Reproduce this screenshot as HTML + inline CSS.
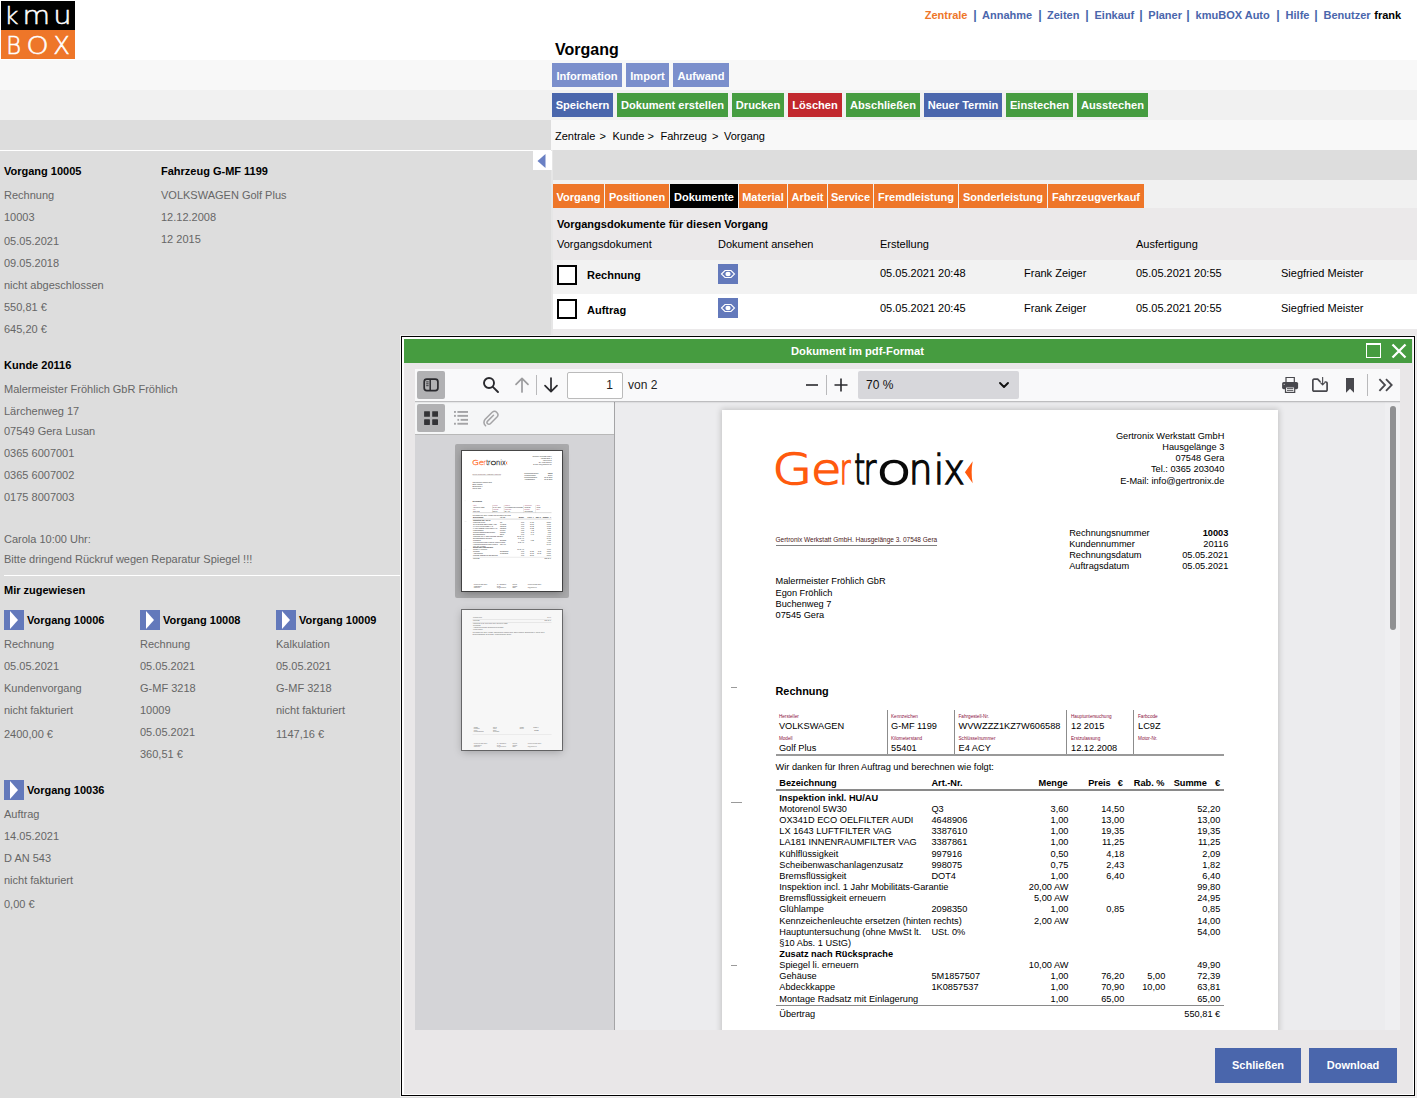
<!DOCTYPE html>
<html lang="de">
<head>
<meta charset="utf-8">
<title>kmuBOX - Vorgang</title>
<style>
*{box-sizing:border-box;margin:0;padding:0}
html,body{width:1417px;height:1098px;overflow:hidden;background:#fff}
body{position:relative;font-family:"Liberation Sans",sans-serif;font-size:11px;color:#000;line-height:14px}
.abs{position:absolute}
.t{position:absolute;white-space:nowrap;line-height:14px;height:14px}
.b{font-weight:bold}
.g{color:#666}
/* bands */
#band1{left:0;top:60px;width:1417px;height:30px;background:#f8f8f8}
#band2{left:0;top:90px;width:1417px;height:30px;background:#f1f1f1}
#band3{left:551px;top:120px;width:866px;height:30px;background:#f8f8f8}
#left{left:0;top:120px;width:551px;height:978px;background:#ddd}
#leftedge{left:551px;top:150px;width:2px;height:948px;background:#e6e6e6}
#right{left:553px;top:150px;width:864px;height:948px;background:#ebe9ea}
#band4{left:553px;top:150px;width:864px;height:30px;background:#ddd}
#band5{left:553px;top:180px;width:864px;height:28px;background:#f1f1f1}
.btn{position:absolute;height:24px;line-height:24px;color:#fff;font-weight:bold;font-size:12px;text-align:center;white-space:nowrap}
.lb{background:#7b8fcc}
.bl{background:#4a66ac}
.gr{background:#469c40}
.rd{background:#c1272d}
.or{background:#ee7629}
.bk{background:#000}
.nav{position:absolute;top:8px;left:925px;font-weight:bold;font-size:12px;white-space:nowrap;color:#4a66ac;word-spacing:0}
.nav .o{color:#ee7629}.nav .k{color:#000}
.play{position:absolute;width:20px;height:20px;background:#6379bb}
.play:after{content:"";position:absolute;left:6px;top:1px;border-left:8.5px solid #fff;border-top:9px solid transparent;border-bottom:9px solid transparent}
.cb{position:absolute;width:20px;height:20px;border:2px solid #000;background:#fff}
.eye{position:absolute;width:20px;height:20px;background:#6379bb}
.brow,.trow{white-space:nowrap;font-size:0}
.btn2{display:inline-block;height:24px;line-height:24px;padding:0;text-align:center;overflow:hidden;margin-right:4px;color:#fff;font-weight:bold;font-size:11.1px;vertical-align:top}
.tab{display:inline-block;height:24px;line-height:24px;padding:0;text-align:center;overflow:hidden;margin-right:1px;color:#fff;font-weight:bold;font-size:11px;vertical-align:top}
.r1 .btn2{line-height:26px}
.tab{line-height:26px !important}
.nv{font-weight:bold;font-size:11px;color:#4a66ac}
.nv.o{color:#ee7629}.nv.k{color:#000}
#dlg{left:401px;top:336px;width:1014px;height:760px;background:#e9e7e8;border:1px solid #000;box-shadow:0 0 0 1px #f0f0f0}
#dlgin{left:1px;top:1px;width:1010px;height:756px}
#dlgtitle{left:404px;top:339px;width:1008px;height:24px;background:#469c40;color:#fff;font-weight:bold;font-size:11.2px;line-height:24px}
#viewer{left:415px;top:369px;width:985px;height:661px;background:#ececee;overflow:hidden}
#tb{left:0;top:0;width:985px;height:33px;background:#f9f9fa;border-bottom:1px solid #bdbdbf;box-shadow:0 1px 1px rgba(0,0,0,.06)}
#sb{left:0;top:33px;width:200px;height:628px;background:#d4d4d7;border-right:1px solid #a4a4a6}
#sbtb{left:0;top:0;width:199px;height:33px;background:#f5f6f7;border-bottom:1px solid #b8b8b8}
.tbtn{position:absolute;width:28px;height:28px;border-radius:2px}
.tog{background:#b1b1b3}
.dbtn{position:absolute;height:35px;line-height:35px;top:1048px;background:#4a66ac;color:#fff;font-weight:bold;font-size:11px;text-align:center}
#pg{left:307px;top:41px;width:555.5px;height:786px;background:#fff;box-shadow:0 0 6px 1px rgba(0,0,0,.18)}
#pgnum{left:152px;top:3px;width:56px;height:27px;background:#fff;border:1px solid #bbb;border-radius:2px;font-size:12px;line-height:25px;text-align:right;padding-right:9px;color:#222}
#zoomsel{left:443px;top:2px;width:161px;height:28px;background:#d7d7db;border-radius:2px;font-size:12px;line-height:28px;padding-left:8px;color:#111}
.sep{position:absolute;width:1px;background:#b9b9bb}
.p{position:absolute;white-space:nowrap;font-size:9.23px;line-height:11px;height:11px;color:#000}
.p.b{font-weight:bold}
.p.lbl{color:#8a1040}
</style>
</head>
<body>
<div class="abs" id="band1"></div>
<div class="abs" id="band2"></div>
<div class="abs" id="band3"></div>
<div class="abs" id="left"></div>
<div class="abs" id="leftedge"></div>
<div class="abs" id="right"></div>
<div class="abs" id="band4"></div>
<div class="abs" id="band5"></div>

<!-- logo -->
<svg class="abs" style="left:1px;top:1px" width="74" height="58" viewBox="0 0 74 58">
  <rect x="0" y="0" width="74" height="29" fill="#000"/>
  <rect x="0" y="29" width="74" height="29" fill="#ee7629"/>
<text transform="translate(3.52,23.30) scale(0.982,0.94)" font-family="'DejaVu Sans Light','DejaVu Sans',sans-serif" font-weight="200" font-size="24.4" fill="#fff" stroke="#fff" stroke-width="0.55" vector-effect="non-scaling-stroke" style="vector-effect:non-scaling-stroke">k</text>
<text transform="translate(21.47,23.30) scale(1.160,1)" font-family="'DejaVu Sans Light','DejaVu Sans',sans-serif" font-weight="200" font-size="24.4" fill="#fff" stroke="#fff" stroke-width="0.55" vector-effect="non-scaling-stroke" style="vector-effect:non-scaling-stroke">m</text>
<text transform="translate(52.37,23.30) scale(1.186,1)" font-family="'DejaVu Sans Light','DejaVu Sans',sans-serif" font-weight="200" font-size="24.4" fill="#fff" stroke="#fff" stroke-width="0.55" vector-effect="non-scaling-stroke" style="vector-effect:non-scaling-stroke">u</text>
<text transform="translate(5.24,52.80) scale(0.928,1)" font-family="'DejaVu Sans Light','DejaVu Sans',sans-serif" font-weight="200" font-size="24.4" fill="#fff" stroke="#fff" stroke-width="0.55" vector-effect="non-scaling-stroke" style="vector-effect:non-scaling-stroke">B</text>
<text transform="translate(25.14,52.80) scale(1.172,1)" font-family="'DejaVu Sans Light','DejaVu Sans',sans-serif" font-weight="200" font-size="24.4" fill="#fff" stroke="#fff" stroke-width="0.55" vector-effect="non-scaling-stroke" style="vector-effect:non-scaling-stroke">O</text>
<text transform="translate(52.15,52.80) scale(0.995,1)" font-family="'DejaVu Sans Light','DejaVu Sans',sans-serif" font-weight="200" font-size="24.4" fill="#fff" stroke="#fff" stroke-width="0.55" vector-effect="non-scaling-stroke" style="vector-effect:non-scaling-stroke">X</text>
</svg>

<!-- top nav -->
<div class="t nv o" style="left:924.7px;top:8px">Zentrale</div>
<div class="t nv " style="left:982px;top:8px">Annahme</div>
<div class="t nv " style="left:1047px;top:8px">Zeiten</div>
<div class="t nv " style="left:1094.5px;top:8px">Einkauf</div>
<div class="t nv " style="left:1148.3px;top:8px">Planer</div>
<div class="t nv " style="left:1195.6px;top:8px">kmuBOX Auto</div>
<div class="t nv " style="left:1285.6px;top:8px">Hilfe</div>
<div class="t nv " style="left:1323.5px;top:8px">Benutzer</div>
<div class="t nv k" style="left:1374.3px;top:8px">frank</div>
<div class="t nv" style="left:973.3px;top:8px;font-size:12.5px">|</div>
<div class="t nv" style="left:1038.3px;top:8px;font-size:12.5px">|</div>
<div class="t nv" style="left:1085.3px;top:8px;font-size:12.5px">|</div>
<div class="t nv" style="left:1139.3px;top:8px;font-size:12.5px">|</div>
<div class="t nv" style="left:1186.3px;top:8px;font-size:12.5px">|</div>
<div class="t nv" style="left:1276.3px;top:8px;font-size:12.5px">|</div>
<div class="t nv" style="left:1314.2px;top:8px;font-size:12.5px">|</div>

<div class="t b" style="left:555px;top:41px;font-size:16px;line-height:18px;height:18px">Vorgang</div>

<!-- button rows -->
<div class="abs brow r1" style="left:552px;top:63px"><span class="btn2 lb" style="width:70px">Information</span><span class="btn2 lb" style="width:43px">Import</span><span class="btn2 lb" style="width:56px">Aufwand</span></div>
<div class="abs brow" style="left:552px;top:93px"><span class="btn2 bl" style="width:61px">Speichern</span><span class="btn2 gr" style="width:111px">Dokument erstellen</span><span class="btn2 gr" style="width:52px">Drucken</span><span class="btn2 rd" style="width:54px">Löschen</span><span class="btn2 gr" style="width:74px">Abschließen</span><span class="btn2 bl" style="width:78px">Neuer Termin</span><span class="btn2 gr" style="width:67px">Einstechen</span><span class="btn2 gr" style="width:71px">Ausstechen</span></div>

<div class="t" style="left:555px;top:129px">Zentrale</div><div class="t" style="left:599.5px;top:129px">&gt;</div><div class="t" style="left:612.5px;top:129px">Kunde</div><div class="t" style="left:647.5px;top:129px">&gt;</div><div class="t" style="left:660.5px;top:129px">Fahrzeug</div><div class="t" style="left:712px;top:129px">&gt;</div><div class="t" style="left:724px;top:129px">Vorgang</div>

<!-- collapse arrow -->
<div class="abs" style="left:533px;top:151px;width:19px;height:19px;background:#fff"></div>
<svg class="abs" style="left:533px;top:151px" width="19" height="19"><polygon points="4.5,10 12.5,3 12.5,17" fill="#6a80c4"/></svg>

<!-- tabs -->
<div class="abs trow" style="left:553px;top:184px"><span class="tab or" style="width:51px">Vorgang</span><span class="tab or" style="width:64px">Positionen</span><span class="tab bk" style="width:68px">Dokumente</span><span class="tab or" style="width:48px">Material</span><span class="tab or" style="width:39px">Arbeit</span><span class="tab or" style="width:45px">Service</span><span class="tab or" style="width:84px">Fremdleistung</span><span class="tab or" style="width:88px">Sonderleistung</span><span class="tab or" style="width:96px">Fahrzeugverkauf</span></div>

<!-- documents table -->
<div class="abs" style="left:553px;top:260px;width:864px;height:34px;background:#f2f2f2"></div>
<div class="abs" style="left:553px;top:294px;width:864px;height:35px;background:#fff"></div>
<div class="t b" style="left:557px;top:217px">Vorgangsdokumente für diesen Vorgang</div>
<div class="t" style="left:557px;top:237px">Vorgangsdokument</div>
<div class="t" style="left:718px;top:237px">Dokument ansehen</div>
<div class="t" style="left:880px;top:237px">Erstellung</div>
<div class="t" style="left:1136px;top:237px">Ausfertigung</div>

<div class="cb" style="left:557px;top:265px"></div>
<div class="t b" style="left:587px;top:268px">Rechnung</div>
<div class="eye" style="left:718px;top:264px"><svg width="20" height="20" viewBox="0 0 20 20"><path d="M3.5 10 L7 6.5 H13 L16.5 10 L13 13.5 H7 Z" fill="none" stroke="#fff" stroke-width="1.1"/><ellipse cx="10" cy="10" rx="2.6" ry="2.2" fill="#fff"/></svg></div>
<div class="t" style="left:880px;top:266px">05.05.2021 20:48</div>
<div class="t" style="left:1024px;top:266px">Frank Zeiger</div>
<div class="t" style="left:1136px;top:266px">05.05.2021 20:55</div>
<div class="t" style="left:1281px;top:266px">Siegfried Meister</div>

<div class="cb" style="left:557px;top:299px"></div>
<div class="t b" style="left:587px;top:303px">Auftrag</div>
<div class="eye" style="left:718px;top:298px"><svg width="20" height="20" viewBox="0 0 20 20"><path d="M3.5 10 L7 6.5 H13 L16.5 10 L13 13.5 H7 Z" fill="none" stroke="#fff" stroke-width="1.1"/><ellipse cx="10" cy="10" rx="2.6" ry="2.2" fill="#fff"/></svg></div>
<div class="t" style="left:880px;top:301px">05.05.2021 20:45</div>
<div class="t" style="left:1024px;top:301px">Frank Zeiger</div>
<div class="t" style="left:1136px;top:301px">05.05.2021 20:55</div>
<div class="t" style="left:1281px;top:301px">Siegfried Meister</div>

<!-- left panel -->
<div class="abs" style="left:0;top:150px;width:551px;height:1px;background:#fff"></div>
<div class="t b" style="left:4px;top:164px">Vorgang 10005</div>
<div class="t g" style="left:4px;top:188px">Rechnung</div>
<div class="t g" style="left:4px;top:210px">10003</div>
<div class="t g" style="left:4px;top:234px">05.05.2021</div>
<div class="t g" style="left:4px;top:256px">09.05.2018</div>
<div class="t g" style="left:4px;top:278px">nicht abgeschlossen</div>
<div class="t g" style="left:4px;top:300px">550,81 €</div>
<div class="t g" style="left:4px;top:322px">645,20 €</div>
<div class="t b" style="left:161px;top:164px">Fahrzeug G-MF 1199</div>
<div class="t g" style="left:161px;top:188px">VOLKSWAGEN Golf Plus</div>
<div class="t g" style="left:161px;top:210px">12.12.2008</div>
<div class="t g" style="left:161px;top:232px">12 2015</div>

<div class="t b" style="left:4px;top:358px">Kunde 20116</div>
<div class="t g" style="left:4px;top:382px">Malermeister Fröhlich GbR Fröhlich</div>
<div class="t g" style="left:4px;top:404px">Lärchenweg 17</div>
<div class="t g" style="left:4px;top:424px">07549 Gera Lusan</div>
<div class="t g" style="left:4px;top:446px">0365 6007001</div>
<div class="t g" style="left:4px;top:468px">0365 6007002</div>
<div class="t g" style="left:4px;top:490px">0175 8007003</div>
<div class="t g" style="left:4px;top:532px">Carola 10:00 Uhr:</div>
<div class="t g" style="left:4px;top:552px">Bitte dringend Rückruf wegen Reparatur Spiegel !!!</div>
<div class="abs" style="left:4px;top:575px;width:397px;height:1px;background:#fff"></div>
<div class="t b" style="left:4px;top:583px">Mir zugewiesen</div>

<div class="play" style="left:4px;top:610px"></div><div class="t b" style="left:27px;top:613px">Vorgang 10006</div>
<div class="t g" style="left:4px;top:637px">Rechnung</div>
<div class="t g" style="left:4px;top:659px">05.05.2021</div>
<div class="t g" style="left:4px;top:681px">Kundenvorgang</div>
<div class="t g" style="left:4px;top:703px">nicht fakturiert</div>
<div class="t g" style="left:4px;top:727px">2400,00 €</div>

<div class="play" style="left:140px;top:610px"></div><div class="t b" style="left:163px;top:613px">Vorgang 10008</div>
<div class="t g" style="left:140px;top:637px">Rechnung</div>
<div class="t g" style="left:140px;top:659px">05.05.2021</div>
<div class="t g" style="left:140px;top:681px">G-MF 3218</div>
<div class="t g" style="left:140px;top:703px">10009</div>
<div class="t g" style="left:140px;top:725px">05.05.2021</div>
<div class="t g" style="left:140px;top:747px">360,51 €</div>

<div class="play" style="left:276px;top:610px"></div><div class="t b" style="left:299px;top:613px">Vorgang 10009</div>
<div class="t g" style="left:276px;top:637px">Kalkulation</div>
<div class="t g" style="left:276px;top:659px">05.05.2021</div>
<div class="t g" style="left:276px;top:681px">G-MF 3218</div>
<div class="t g" style="left:276px;top:703px">nicht fakturiert</div>
<div class="t g" style="left:276px;top:727px">1147,16 €</div>

<div class="play" style="left:4px;top:780px"></div><div class="t b" style="left:27px;top:783px">Vorgang 10036</div>
<div class="t g" style="left:4px;top:807px">Auftrag</div>
<div class="t g" style="left:4px;top:829px">14.05.2021</div>
<div class="t g" style="left:4px;top:851px">D AN 543</div>
<div class="t g" style="left:4px;top:873px">nicht fakturiert</div>
<div class="t g" style="left:4px;top:897px">0,00 €</div>

<!-- dialog -->
<div class="abs" id="dlg"></div>
<div class="abs" style="left:402px;top:337px;width:1012px;height:758px;border:2px solid #fff;border-bottom:1px solid #fff;border-right:1px solid #fff"></div>
<div class="abs" id="dlgtitle"><span class="t" style="left:387px;top:0;height:24px;line-height:24px">Dokument im pdf-Format</span></div>
<div class="abs" style="left:1366px;top:343px;width:15px;height:15px;border:1px solid #fff;border-top-width:2px"></div>
<svg class="abs" style="left:1391px;top:343px" width="16" height="16" viewBox="0 0 16 16"><path d="M1.5 1.5 L14.5 14.5 M14.5 1.5 L1.5 14.5" stroke="#fff" stroke-width="2.3" fill="none"/></svg>

<div class="abs" id="viewer">
  <!-- page area -->
  <div class="abs" id="pg">
<svg class="abs" style="left:50px;top:36px" width="206" height="46" viewBox="0 0 206 46"><text transform="translate(0.38,38.40) scale(1.211,1)" font-family="'DejaVu Sans Light','DejaVu Sans',sans-serif" font-weight="200" font-size="42.2" fill="#ff5a0e" stroke="#ff5a0e" stroke-width="1.5">G</text>
<text transform="translate(39.03,38.40) scale(1.173,1)" font-family="'DejaVu Sans Light','DejaVu Sans',sans-serif" font-weight="200" font-size="42.2" fill="#ff5a0e" stroke="#ff5a0e" stroke-width="1.5">e</text>
<text transform="translate(67.64,38.40) scale(0.625,1)" font-family="'DejaVu Sans Light','DejaVu Sans',sans-serif" font-weight="200" font-size="42.2" fill="#ff5a0e" stroke="#ff5a0e" stroke-width="1.5">r</text>
<text transform="translate(82.17,38.40) scale(0.657,1)" font-family="'DejaVu Sans Light','DejaVu Sans',sans-serif" font-weight="200" font-size="42.2" fill="#0a0a0a" stroke="#0a0a0a" stroke-width="1.5">t</text>
<text transform="translate(91.50,38.40) scale(0.737,1)" font-family="'DejaVu Sans Light','DejaVu Sans',sans-serif" font-weight="200" font-size="42.2" fill="#0a0a0a" stroke="#0a0a0a" stroke-width="1.5">r</text>
<text transform="translate(104.16,38.40) scale(1.375,1)" font-family="'DejaVu Sans Light','DejaVu Sans',sans-serif" font-weight="200" font-size="42.2" fill="#0a0a0a" stroke="#0a0a0a" stroke-width="1.5">o</text>
<text transform="translate(136.80,38.40) scale(0.889,1)" font-family="'DejaVu Sans Light','DejaVu Sans',sans-serif" font-weight="200" font-size="42.2" fill="#0a0a0a" stroke="#0a0a0a" stroke-width="1.5">n</text>
<text transform="translate(161.70,38.40) scale(0.897,0.95)" font-family="'DejaVu Sans Light','DejaVu Sans',sans-serif" font-weight="200" font-size="42.2" fill="#0a0a0a" stroke="#0a0a0a" stroke-width="1.5">i</text>
<text transform="translate(171.68,38.40) scale(0.838,1)" font-family="'DejaVu Sans Light','DejaVu Sans',sans-serif" font-weight="200" font-size="42.2" fill="#0a0a0a" stroke="#0a0a0a" stroke-width="1.5">x</text><path d="M192.9 26.3 L200.7 15.2 Q198.6 26.3 200.7 37.3 Z" fill="#ff5a0e"/></svg>
<div class="p" style="top:21px;right:53.2px;">Gertronix Werkstatt GmbH</div>
<div class="p" style="top:32px;right:53.2px;">Hausgelänge 3</div>
<div class="p" style="top:43px;right:53.2px;">07548 Gera</div>
<div class="p" style="top:54px;right:53.2px;">Tel.: 0365 203040</div>
<div class="p" style="top:66px;right:53.2px;">E-Mail: info@gertronix.de</div>
<div class="p" style="top:124px;left:53.5px;font-size:6.5px;line-height:11px;height:11px;color:#4a2020;">Gertronix Werkstatt GmbH. Hausgelänge 3. 07548 Gera</div>
<div class="abs" style="left:53.5px;top:135.2px;width:161.2px;height:1px;background:#808080"></div>
<div class="p" style="top:166px;left:53.5px;">Malermeister Fröhlich GbR</div>
<div class="p" style="top:178px;left:53.5px;">Egon Fröhlich</div>
<div class="p" style="top:189px;left:53.5px;">Buchenweg 7</div>
<div class="p" style="top:200px;left:53.5px;">07545 Gera</div>
<div class="p" style="top:118px;left:347.2px;">Rechnungsnummer</div>
<div class="p b" style="top:118px;right:49.2px;">10003</div>
<div class="p" style="top:129px;left:347.2px;">Kundennummer</div>
<div class="p" style="top:129px;right:49.2px;">20116</div>
<div class="p" style="top:140px;left:347.2px;">Rechnungsdatum</div>
<div class="p" style="top:140px;right:49.2px;">05.05.2021</div>
<div class="p" style="top:151px;left:347.2px;">Auftragsdatum</div>
<div class="p" style="top:151px;right:49.2px;">05.05.2021</div>
<div class="abs" style="left:9.0px;top:277.3px;width:6.0px;height:1px;background:#9a9a9a"></div>
<div class="abs" style="left:9.0px;top:392.3px;width:11.0px;height:1px;background:#9a9a9a"></div>
<div class="abs" style="left:9.0px;top:554.7px;width:6.0px;height:1px;background:#9a9a9a"></div>
<div class="p b" style="top:276px;left:53.5px;font-size:10.9px;line-height:11px;height:11px;">Rechnung</div>
<div class="abs" style="left:164.5px;top:300.0px;width:1px;height:45.0px;background:#8c8c8c"></div>
<div class="abs" style="left:232.0px;top:300.0px;width:1px;height:45.0px;background:#8c8c8c"></div>
<div class="abs" style="left:344.1px;top:300.0px;width:1px;height:45.0px;background:#8c8c8c"></div>
<div class="abs" style="left:411.1px;top:300.0px;width:1px;height:45.0px;background:#8c8c8c"></div>
<div class="abs" style="left:53.5px;top:344.4px;width:448.9px;height:1.3px;background:#999"></div>
<div class="p lbl" style="top:303px;left:56.9px;font-size:4.67px;line-height:8px;height:8px;">Hersteller</div>
<div class="p" style="top:311px;left:56.9px;">VOLKSWAGEN</div>
<div class="p lbl" style="top:325px;left:56.9px;font-size:4.67px;line-height:8px;height:8px;">Modell</div>
<div class="p" style="top:333px;left:56.9px;">Golf Plus</div>
<div class="p lbl" style="top:303px;left:169.0px;font-size:4.67px;line-height:8px;height:8px;">Kennzeichen</div>
<div class="p" style="top:311px;left:169.0px;">G-MF 1199</div>
<div class="p lbl" style="top:325px;left:169.0px;font-size:4.67px;line-height:8px;height:8px;">Kilometerstand</div>
<div class="p" style="top:333px;left:169.0px;">55401</div>
<div class="p lbl" style="top:303px;left:236.5px;font-size:4.67px;line-height:8px;height:8px;">Fahrgestell-Nr.</div>
<div class="p" style="top:311px;left:236.5px;">WVWZZZ1KZ7W606588</div>
<div class="p lbl" style="top:325px;left:236.5px;font-size:4.67px;line-height:8px;height:8px;">Schlüsselnummer</div>
<div class="p" style="top:333px;left:236.5px;">E4 ACY</div>
<div class="p lbl" style="top:303px;left:349.0px;font-size:4.67px;line-height:8px;height:8px;">Hauptuntersuchung</div>
<div class="p" style="top:311px;left:349.0px;">12 2015</div>
<div class="p lbl" style="top:325px;left:349.0px;font-size:4.67px;line-height:8px;height:8px;">Erstzulassung</div>
<div class="p" style="top:333px;left:349.0px;">12.12.2008</div>
<div class="p lbl" style="top:303px;left:416.0px;font-size:4.67px;line-height:8px;height:8px;">Farbcode</div>
<div class="p" style="top:311px;left:416.0px;">LC9Z</div>
<div class="p lbl" style="top:325px;left:416.0px;font-size:4.67px;line-height:8px;height:8px;">Motor-Nr.</div>
<div class="p" style="top:352px;left:53.5px;">Wir danken für Ihren Auftrag und berechnen wie folgt:</div>
<div class="p b" style="top:368px;left:57.3px;">Bezeichnung</div>
<div class="p b" style="top:368px;left:209.4px;">Art.-Nr.</div>
<div class="p b" style="top:368px;right:209.8px;">Menge</div>
<div class="p b" style="top:368px;right:154.5px;">Preis&nbsp;&nbsp;<span style="margin-left:2px">€</span></div>
<div class="p b" style="top:368px;right:113.0px;">Rab. %</div>
<div class="p b" style="top:368px;right:57.3px;">Summe&nbsp;&nbsp;<span style="margin-left:3px">€</span></div>
<div class="abs" style="left:53.5px;top:379.3px;width:448.9px;height:1.4px;background:#8a8a8a"></div>
<div class="p b" style="top:383px;left:57.3px;">Inspektion inkl. HU/AU</div>
<div class="p" style="top:394px;left:57.3px;">Motorenöl 5W30</div>
<div class="p" style="top:394px;left:209.4px;">Q3</div>
<div class="p" style="top:394px;right:209.0px;">3,60</div>
<div class="p" style="top:394px;right:153.2px;">14,50</div>
<div class="p" style="top:394px;right:57.2px;">52,20</div>
<div class="p" style="top:405px;left:57.3px;">OX341D ECO OELFILTER AUDI</div>
<div class="p" style="top:405px;left:209.4px;">4648906</div>
<div class="p" style="top:405px;right:209.0px;">1,00</div>
<div class="p" style="top:405px;right:153.2px;">13,00</div>
<div class="p" style="top:405px;right:57.2px;">13,00</div>
<div class="p" style="top:416px;left:57.3px;">LX 1643 LUFTFILTER VAG</div>
<div class="p" style="top:416px;left:209.4px;">3387610</div>
<div class="p" style="top:416px;right:209.0px;">1,00</div>
<div class="p" style="top:416px;right:153.2px;">19,35</div>
<div class="p" style="top:416px;right:57.2px;">19,35</div>
<div class="p" style="top:427px;left:57.3px;">LA181 INNENRAUMFILTER VAG</div>
<div class="p" style="top:427px;left:209.4px;">3387861</div>
<div class="p" style="top:427px;right:209.0px;">1,00</div>
<div class="p" style="top:427px;right:153.2px;">11,25</div>
<div class="p" style="top:427px;right:57.2px;">11,25</div>
<div class="p" style="top:439px;left:57.3px;">Kühlflüssigkeit</div>
<div class="p" style="top:439px;left:209.4px;">997916</div>
<div class="p" style="top:439px;right:209.0px;">0,50</div>
<div class="p" style="top:439px;right:153.2px;">4,18</div>
<div class="p" style="top:439px;right:57.2px;">2,09</div>
<div class="p" style="top:450px;left:57.3px;">Scheibenwaschanlagenzusatz</div>
<div class="p" style="top:450px;left:209.4px;">998075</div>
<div class="p" style="top:450px;right:209.0px;">0,75</div>
<div class="p" style="top:450px;right:153.2px;">2,43</div>
<div class="p" style="top:450px;right:57.2px;">1,82</div>
<div class="p" style="top:461px;left:57.3px;">Bremsflüssigkeit</div>
<div class="p" style="top:461px;left:209.4px;">DOT4</div>
<div class="p" style="top:461px;right:209.0px;">1,00</div>
<div class="p" style="top:461px;right:153.2px;">6,40</div>
<div class="p" style="top:461px;right:57.2px;">6,40</div>
<div class="p" style="top:472px;left:57.3px;">Inspektion incl. 1 Jahr Mobilitäts-Garantie</div>
<div class="p" style="top:472px;right:209.0px;">20,00 AW</div>
<div class="p" style="top:472px;right:57.2px;">99,80</div>
<div class="p" style="top:483px;left:57.3px;">Bremsflüssigkeit erneuern</div>
<div class="p" style="top:483px;right:209.0px;">5,00 AW</div>
<div class="p" style="top:483px;right:57.2px;">24,95</div>
<div class="p" style="top:494px;left:57.3px;">Glühlampe</div>
<div class="p" style="top:494px;left:209.4px;">2098350</div>
<div class="p" style="top:494px;right:209.0px;">1,00</div>
<div class="p" style="top:494px;right:153.2px;">0,85</div>
<div class="p" style="top:494px;right:57.2px;">0,85</div>
<div class="p" style="top:506px;left:57.3px;">Kennzeichenleuchte ersetzen (hinten rechts)</div>
<div class="p" style="top:506px;right:209.0px;">2,00 AW</div>
<div class="p" style="top:506px;right:57.2px;">14,00</div>
<div class="p" style="top:517px;left:57.3px;">Hauptuntersuchung (ohne MwSt lt.</div>
<div class="p" style="top:517px;left:209.4px;">USt. 0%</div>
<div class="p" style="top:517px;right:57.2px;">54,00</div>
<div class="p" style="top:528px;left:57.3px;">§10 Abs. 1 UStG)</div>
<div class="p b" style="top:539px;left:57.3px;">Zusatz nach Rücksprache</div>
<div class="p" style="top:550px;left:57.3px;">Spiegel li. erneuern</div>
<div class="p" style="top:550px;right:209.0px;">10,00 AW</div>
<div class="p" style="top:550px;right:57.2px;">49,90</div>
<div class="p" style="top:561px;left:57.3px;">Gehäuse</div>
<div class="p" style="top:561px;left:209.4px;">5M1857507</div>
<div class="p" style="top:561px;right:209.0px;">1,00</div>
<div class="p" style="top:561px;right:153.2px;">76,20</div>
<div class="p" style="top:561px;right:112.2px;">5,00</div>
<div class="p" style="top:561px;right:57.2px;">72,39</div>
<div class="p" style="top:572px;left:57.3px;">Abdeckkappe</div>
<div class="p" style="top:572px;left:209.4px;">1K0857537</div>
<div class="p" style="top:572px;right:209.0px;">1,00</div>
<div class="p" style="top:572px;right:153.2px;">70,90</div>
<div class="p" style="top:572px;right:112.2px;">10,00</div>
<div class="p" style="top:572px;right:57.2px;">63,81</div>
<div class="p" style="top:584px;left:57.3px;">Montage Radsatz mit Einlagerung</div>
<div class="p" style="top:584px;right:209.0px;">1,00</div>
<div class="p" style="top:584px;right:153.2px;">65,00</div>
<div class="p" style="top:584px;right:57.2px;">65,00</div>
<div class="abs" style="left:53.5px;top:594.6px;width:448.9px;height:1.2px;background:#8a8a8a"></div>
<div class="p" style="top:599px;left:57.3px;">Übertrag</div>
<div class="p" style="top:599px;right:57.3px;">550,81 €</div>
<div class="p" style="top:746px;left:61.0px;font-size:6.5px;line-height:11px;height:11px;">Gertronix Werkstatt GmbH</div>
<div class="p" style="top:755px;left:61.0px;font-size:6.5px;line-height:11px;height:11px;">Hausgelänge 3</div>
<div class="p" style="top:764px;left:61.0px;font-size:6.5px;line-height:11px;height:11px;">07548 Gera</div>
<div class="p" style="top:746px;left:193.0px;font-size:6.5px;line-height:11px;height:11px;">Tel.: 0365 203040</div>
<div class="p" style="top:755px;left:193.0px;font-size:6.5px;line-height:11px;height:11px;">E-Mail:</div>
<div class="p" style="top:764px;left:193.0px;font-size:6.5px;line-height:11px;height:11px;">info@gertronix.de</div>
<div class="p" style="top:746px;left:280.0px;font-size:6.5px;line-height:11px;height:11px;">Gertronix</div>
<div class="p" style="top:755px;left:280.0px;font-size:6.5px;line-height:11px;height:11px;">Werkstatt</div>
<div class="p" style="top:764px;left:280.0px;font-size:6.5px;line-height:11px;height:11px;">GmbH</div>
<div class="p" style="top:746px;left:367.0px;font-size:6.5px;line-height:11px;height:11px;">Gertronix Werkstatt GmbH</div>
<div class="p" style="top:764px;left:367.0px;font-size:6.5px;line-height:11px;height:11px;">info@gertronix.de</div>
  </div>
  <!-- scrollbar -->
  <div class="abs" style="left:970px;top:33px;width:15px;height:628px;background:#efeff1"></div>
  <div class="abs" style="left:975px;top:37px;width:6px;height:224px;border-radius:3px;background:#8f9092"></div>
  <!-- sidebar -->
  <div class="abs" id="sb">
    <div class="abs" id="sbtb">
      <div class="tbtn tog" style="left:2px;top:2px"></div>
      <svg class="abs" style="left:9px;top:9px" width="15" height="15" viewBox="0 0 15 15" fill="#333336"><rect x="0.1" y="0.2" width="5.8" height="5.6" rx="0.4"/><rect x="8.2" y="0.2" width="5.8" height="5.6" rx="0.4"/><rect x="0.1" y="8.3" width="5.8" height="5.6" rx="0.4"/><rect x="8.2" y="8.3" width="5.8" height="5.6" rx="0.4"/></svg>
      <svg class="abs" style="left:38px;top:8px" width="16" height="16" viewBox="0 0 16 16" fill="#a4a4a6"><rect x="1" y="1" width="1.9" height="1.9"/><rect x="4.4" y="1" width="10.6" height="1.9"/><rect x="1" y="4.9" width="1.9" height="1.9"/><rect x="4.4" y="4.9" width="10.6" height="1.9"/><rect x="4.4" y="8.9" width="1.7" height="1.9"/><rect x="7.6" y="8.9" width="7.4" height="1.9"/><rect x="1" y="12.8" width="1.9" height="1.9"/><rect x="4.4" y="12.8" width="10.6" height="1.9"/></svg>
      <svg class="abs" style="left:67px;top:8px" width="18" height="18" viewBox="0 0 18 18" fill="none" stroke="#a4a4a6" stroke-width="1.5" stroke-linecap="round"><path d="M11.5 5.2 L5.6 11.1 a1.9 1.9 0 0 0 2.7 2.7 L15 7.1 a3.4 3.4 0 0 0 -4.8 -4.8 L3.2 9.3 a4.9 4.9 0 0 0 0.4 6.5"/></svg>
    </div>
    <!-- thumbnails -->
    <div class="abs" style="left:40px;top:42px;width:114px;height:154px;background:#a9a9ab;border-radius:2px"></div>
    <div class="abs" style="left:47px;top:49px;width:100px;height:140px;background:#fff;overflow:hidden;box-shadow:0 0 0 1px rgba(0,0,0,.55),0 2px 8px rgba(0,0,0,.3)">
      <div class="abs thumbpg" style="left:1px;top:1px;width:555.5px;height:786px;transform:scale(0.1764);transform-origin:0 0;opacity:.88">
<svg class="abs" style="left:50px;top:36px" width="206" height="46" viewBox="0 0 206 46"><text transform="translate(0.38,38.40) scale(1.211,1)" font-family="'DejaVu Sans Light','DejaVu Sans',sans-serif" font-weight="200" font-size="42.2" fill="#ff5a0e" stroke="#ff5a0e" stroke-width="1.5">G</text>
<text transform="translate(39.03,38.40) scale(1.173,1)" font-family="'DejaVu Sans Light','DejaVu Sans',sans-serif" font-weight="200" font-size="42.2" fill="#ff5a0e" stroke="#ff5a0e" stroke-width="1.5">e</text>
<text transform="translate(67.64,38.40) scale(0.625,1)" font-family="'DejaVu Sans Light','DejaVu Sans',sans-serif" font-weight="200" font-size="42.2" fill="#ff5a0e" stroke="#ff5a0e" stroke-width="1.5">r</text>
<text transform="translate(82.17,38.40) scale(0.657,1)" font-family="'DejaVu Sans Light','DejaVu Sans',sans-serif" font-weight="200" font-size="42.2" fill="#0a0a0a" stroke="#0a0a0a" stroke-width="1.5">t</text>
<text transform="translate(91.50,38.40) scale(0.737,1)" font-family="'DejaVu Sans Light','DejaVu Sans',sans-serif" font-weight="200" font-size="42.2" fill="#0a0a0a" stroke="#0a0a0a" stroke-width="1.5">r</text>
<text transform="translate(104.16,38.40) scale(1.375,1)" font-family="'DejaVu Sans Light','DejaVu Sans',sans-serif" font-weight="200" font-size="42.2" fill="#0a0a0a" stroke="#0a0a0a" stroke-width="1.5">o</text>
<text transform="translate(136.80,38.40) scale(0.889,1)" font-family="'DejaVu Sans Light','DejaVu Sans',sans-serif" font-weight="200" font-size="42.2" fill="#0a0a0a" stroke="#0a0a0a" stroke-width="1.5">n</text>
<text transform="translate(161.70,38.40) scale(0.897,0.95)" font-family="'DejaVu Sans Light','DejaVu Sans',sans-serif" font-weight="200" font-size="42.2" fill="#0a0a0a" stroke="#0a0a0a" stroke-width="1.5">i</text>
<text transform="translate(171.68,38.40) scale(0.838,1)" font-family="'DejaVu Sans Light','DejaVu Sans',sans-serif" font-weight="200" font-size="42.2" fill="#0a0a0a" stroke="#0a0a0a" stroke-width="1.5">x</text><path d="M192.9 26.3 L200.7 15.2 Q198.6 26.3 200.7 37.3 Z" fill="#ff5a0e"/></svg>
<div class="p" style="top:21px;right:53.2px;">Gertronix Werkstatt GmbH</div>
<div class="p" style="top:32px;right:53.2px;">Hausgelänge 3</div>
<div class="p" style="top:43px;right:53.2px;">07548 Gera</div>
<div class="p" style="top:54px;right:53.2px;">Tel.: 0365 203040</div>
<div class="p" style="top:66px;right:53.2px;">E-Mail: info@gertronix.de</div>
<div class="p" style="top:124px;left:53.5px;font-size:6.5px;line-height:11px;height:11px;color:#4a2020;">Gertronix Werkstatt GmbH. Hausgelänge 3. 07548 Gera</div>
<div class="abs" style="left:53.5px;top:135.2px;width:161.2px;height:1px;background:#808080"></div>
<div class="p" style="top:166px;left:53.5px;">Malermeister Fröhlich GbR</div>
<div class="p" style="top:178px;left:53.5px;">Egon Fröhlich</div>
<div class="p" style="top:189px;left:53.5px;">Buchenweg 7</div>
<div class="p" style="top:200px;left:53.5px;">07545 Gera</div>
<div class="p" style="top:118px;left:347.2px;">Rechnungsnummer</div>
<div class="p b" style="top:118px;right:49.2px;">10003</div>
<div class="p" style="top:129px;left:347.2px;">Kundennummer</div>
<div class="p" style="top:129px;right:49.2px;">20116</div>
<div class="p" style="top:140px;left:347.2px;">Rechnungsdatum</div>
<div class="p" style="top:140px;right:49.2px;">05.05.2021</div>
<div class="p" style="top:151px;left:347.2px;">Auftragsdatum</div>
<div class="p" style="top:151px;right:49.2px;">05.05.2021</div>
<div class="abs" style="left:9.0px;top:277.3px;width:6.0px;height:1px;background:#9a9a9a"></div>
<div class="abs" style="left:9.0px;top:392.3px;width:11.0px;height:1px;background:#9a9a9a"></div>
<div class="abs" style="left:9.0px;top:554.7px;width:6.0px;height:1px;background:#9a9a9a"></div>
<div class="p b" style="top:276px;left:53.5px;font-size:10.9px;line-height:11px;height:11px;">Rechnung</div>
<div class="abs" style="left:164.5px;top:300.0px;width:1px;height:45.0px;background:#8c8c8c"></div>
<div class="abs" style="left:232.0px;top:300.0px;width:1px;height:45.0px;background:#8c8c8c"></div>
<div class="abs" style="left:344.1px;top:300.0px;width:1px;height:45.0px;background:#8c8c8c"></div>
<div class="abs" style="left:411.1px;top:300.0px;width:1px;height:45.0px;background:#8c8c8c"></div>
<div class="abs" style="left:53.5px;top:344.4px;width:448.9px;height:1.3px;background:#999"></div>
<div class="p lbl" style="top:303px;left:56.9px;font-size:4.67px;line-height:8px;height:8px;">Hersteller</div>
<div class="p" style="top:311px;left:56.9px;">VOLKSWAGEN</div>
<div class="p lbl" style="top:325px;left:56.9px;font-size:4.67px;line-height:8px;height:8px;">Modell</div>
<div class="p" style="top:333px;left:56.9px;">Golf Plus</div>
<div class="p lbl" style="top:303px;left:169.0px;font-size:4.67px;line-height:8px;height:8px;">Kennzeichen</div>
<div class="p" style="top:311px;left:169.0px;">G-MF 1199</div>
<div class="p lbl" style="top:325px;left:169.0px;font-size:4.67px;line-height:8px;height:8px;">Kilometerstand</div>
<div class="p" style="top:333px;left:169.0px;">55401</div>
<div class="p lbl" style="top:303px;left:236.5px;font-size:4.67px;line-height:8px;height:8px;">Fahrgestell-Nr.</div>
<div class="p" style="top:311px;left:236.5px;">WVWZZZ1KZ7W606588</div>
<div class="p lbl" style="top:325px;left:236.5px;font-size:4.67px;line-height:8px;height:8px;">Schlüsselnummer</div>
<div class="p" style="top:333px;left:236.5px;">E4 ACY</div>
<div class="p lbl" style="top:303px;left:349.0px;font-size:4.67px;line-height:8px;height:8px;">Hauptuntersuchung</div>
<div class="p" style="top:311px;left:349.0px;">12 2015</div>
<div class="p lbl" style="top:325px;left:349.0px;font-size:4.67px;line-height:8px;height:8px;">Erstzulassung</div>
<div class="p" style="top:333px;left:349.0px;">12.12.2008</div>
<div class="p lbl" style="top:303px;left:416.0px;font-size:4.67px;line-height:8px;height:8px;">Farbcode</div>
<div class="p" style="top:311px;left:416.0px;">LC9Z</div>
<div class="p lbl" style="top:325px;left:416.0px;font-size:4.67px;line-height:8px;height:8px;">Motor-Nr.</div>
<div class="p" style="top:352px;left:53.5px;">Wir danken für Ihren Auftrag und berechnen wie folgt:</div>
<div class="p b" style="top:368px;left:57.3px;">Bezeichnung</div>
<div class="p b" style="top:368px;left:209.4px;">Art.-Nr.</div>
<div class="p b" style="top:368px;right:209.8px;">Menge</div>
<div class="p b" style="top:368px;right:154.5px;">Preis&nbsp;&nbsp;<span style="margin-left:2px">€</span></div>
<div class="p b" style="top:368px;right:113.0px;">Rab. %</div>
<div class="p b" style="top:368px;right:57.3px;">Summe&nbsp;&nbsp;<span style="margin-left:3px">€</span></div>
<div class="abs" style="left:53.5px;top:379.3px;width:448.9px;height:1.4px;background:#8a8a8a"></div>
<div class="p b" style="top:383px;left:57.3px;">Inspektion inkl. HU/AU</div>
<div class="p" style="top:394px;left:57.3px;">Motorenöl 5W30</div>
<div class="p" style="top:394px;left:209.4px;">Q3</div>
<div class="p" style="top:394px;right:209.0px;">3,60</div>
<div class="p" style="top:394px;right:153.2px;">14,50</div>
<div class="p" style="top:394px;right:57.2px;">52,20</div>
<div class="p" style="top:405px;left:57.3px;">OX341D ECO OELFILTER AUDI</div>
<div class="p" style="top:405px;left:209.4px;">4648906</div>
<div class="p" style="top:405px;right:209.0px;">1,00</div>
<div class="p" style="top:405px;right:153.2px;">13,00</div>
<div class="p" style="top:405px;right:57.2px;">13,00</div>
<div class="p" style="top:416px;left:57.3px;">LX 1643 LUFTFILTER VAG</div>
<div class="p" style="top:416px;left:209.4px;">3387610</div>
<div class="p" style="top:416px;right:209.0px;">1,00</div>
<div class="p" style="top:416px;right:153.2px;">19,35</div>
<div class="p" style="top:416px;right:57.2px;">19,35</div>
<div class="p" style="top:427px;left:57.3px;">LA181 INNENRAUMFILTER VAG</div>
<div class="p" style="top:427px;left:209.4px;">3387861</div>
<div class="p" style="top:427px;right:209.0px;">1,00</div>
<div class="p" style="top:427px;right:153.2px;">11,25</div>
<div class="p" style="top:427px;right:57.2px;">11,25</div>
<div class="p" style="top:439px;left:57.3px;">Kühlflüssigkeit</div>
<div class="p" style="top:439px;left:209.4px;">997916</div>
<div class="p" style="top:439px;right:209.0px;">0,50</div>
<div class="p" style="top:439px;right:153.2px;">4,18</div>
<div class="p" style="top:439px;right:57.2px;">2,09</div>
<div class="p" style="top:450px;left:57.3px;">Scheibenwaschanlagenzusatz</div>
<div class="p" style="top:450px;left:209.4px;">998075</div>
<div class="p" style="top:450px;right:209.0px;">0,75</div>
<div class="p" style="top:450px;right:153.2px;">2,43</div>
<div class="p" style="top:450px;right:57.2px;">1,82</div>
<div class="p" style="top:461px;left:57.3px;">Bremsflüssigkeit</div>
<div class="p" style="top:461px;left:209.4px;">DOT4</div>
<div class="p" style="top:461px;right:209.0px;">1,00</div>
<div class="p" style="top:461px;right:153.2px;">6,40</div>
<div class="p" style="top:461px;right:57.2px;">6,40</div>
<div class="p" style="top:472px;left:57.3px;">Inspektion incl. 1 Jahr Mobilitäts-Garantie</div>
<div class="p" style="top:472px;right:209.0px;">20,00 AW</div>
<div class="p" style="top:472px;right:57.2px;">99,80</div>
<div class="p" style="top:483px;left:57.3px;">Bremsflüssigkeit erneuern</div>
<div class="p" style="top:483px;right:209.0px;">5,00 AW</div>
<div class="p" style="top:483px;right:57.2px;">24,95</div>
<div class="p" style="top:494px;left:57.3px;">Glühlampe</div>
<div class="p" style="top:494px;left:209.4px;">2098350</div>
<div class="p" style="top:494px;right:209.0px;">1,00</div>
<div class="p" style="top:494px;right:153.2px;">0,85</div>
<div class="p" style="top:494px;right:57.2px;">0,85</div>
<div class="p" style="top:506px;left:57.3px;">Kennzeichenleuchte ersetzen (hinten rechts)</div>
<div class="p" style="top:506px;right:209.0px;">2,00 AW</div>
<div class="p" style="top:506px;right:57.2px;">14,00</div>
<div class="p" style="top:517px;left:57.3px;">Hauptuntersuchung (ohne MwSt lt.</div>
<div class="p" style="top:517px;left:209.4px;">USt. 0%</div>
<div class="p" style="top:517px;right:57.2px;">54,00</div>
<div class="p" style="top:528px;left:57.3px;">§10 Abs. 1 UStG)</div>
<div class="p b" style="top:539px;left:57.3px;">Zusatz nach Rücksprache</div>
<div class="p" style="top:550px;left:57.3px;">Spiegel li. erneuern</div>
<div class="p" style="top:550px;right:209.0px;">10,00 AW</div>
<div class="p" style="top:550px;right:57.2px;">49,90</div>
<div class="p" style="top:561px;left:57.3px;">Gehäuse</div>
<div class="p" style="top:561px;left:209.4px;">5M1857507</div>
<div class="p" style="top:561px;right:209.0px;">1,00</div>
<div class="p" style="top:561px;right:153.2px;">76,20</div>
<div class="p" style="top:561px;right:112.2px;">5,00</div>
<div class="p" style="top:561px;right:57.2px;">72,39</div>
<div class="p" style="top:572px;left:57.3px;">Abdeckkappe</div>
<div class="p" style="top:572px;left:209.4px;">1K0857537</div>
<div class="p" style="top:572px;right:209.0px;">1,00</div>
<div class="p" style="top:572px;right:153.2px;">70,90</div>
<div class="p" style="top:572px;right:112.2px;">10,00</div>
<div class="p" style="top:572px;right:57.2px;">63,81</div>
<div class="p" style="top:584px;left:57.3px;">Montage Radsatz mit Einlagerung</div>
<div class="p" style="top:584px;right:209.0px;">1,00</div>
<div class="p" style="top:584px;right:153.2px;">65,00</div>
<div class="p" style="top:584px;right:57.2px;">65,00</div>
<div class="abs" style="left:53.5px;top:594.6px;width:448.9px;height:1.2px;background:#8a8a8a"></div>
<div class="p" style="top:599px;left:57.3px;">Übertrag</div>
<div class="p" style="top:599px;right:57.3px;">550,81 €</div>
<div class="p" style="top:746px;left:61.0px;font-size:6.5px;line-height:11px;height:11px;">Gertronix Werkstatt GmbH</div>
<div class="p" style="top:755px;left:61.0px;font-size:6.5px;line-height:11px;height:11px;">Hausgelänge 3</div>
<div class="p" style="top:764px;left:61.0px;font-size:6.5px;line-height:11px;height:11px;">07548 Gera</div>
<div class="p" style="top:746px;left:193.0px;font-size:6.5px;line-height:11px;height:11px;">Tel.: 0365 203040</div>
<div class="p" style="top:755px;left:193.0px;font-size:6.5px;line-height:11px;height:11px;">E-Mail:</div>
<div class="p" style="top:764px;left:193.0px;font-size:6.5px;line-height:11px;height:11px;">info@gertronix.de</div>
<div class="p" style="top:746px;left:280.0px;font-size:6.5px;line-height:11px;height:11px;">Gertronix</div>
<div class="p" style="top:755px;left:280.0px;font-size:6.5px;line-height:11px;height:11px;">Werkstatt</div>
<div class="p" style="top:764px;left:280.0px;font-size:6.5px;line-height:11px;height:11px;">GmbH</div>
<div class="p" style="top:746px;left:367.0px;font-size:6.5px;line-height:11px;height:11px;">Gertronix Werkstatt GmbH</div>
<div class="p" style="top:764px;left:367.0px;font-size:6.5px;line-height:11px;height:11px;">info@gertronix.de</div>
      </div>
    </div>
    <div class="abs" style="left:47px;top:208px;width:100px;height:140px;background:#f7f7f7;overflow:hidden;box-shadow:0 0 0 1px rgba(0,0,0,.45),0 2px 8px rgba(0,0,0,.25)">
      <div class="abs thumbpg" style="left:1px;top:1px;width:555.5px;height:786px;transform:scale(0.1764);transform-origin:0 0;opacity:.65">
<div class="p" style="top:29px;left:57.3px;font-size:6.5px;line-height:11px;height:11px;">Rechnung 10003</div>
<div class="p" style="top:29px;right:57.3px;font-size:6.5px;line-height:11px;height:11px;">Seite 2</div>
<div class="abs" style="left:53.5px;top:47.5px;width:448.9px;height:1px;background:#777"></div>
<div class="p" style="top:51px;left:57.3px;">Übertrag</div>
<div class="p" style="top:51px;right:57.3px;">550,81 €</div>
<div class="abs" style="left:53.5px;top:62.5px;width:448.9px;height:1px;background:#777"></div>
<div class="p" style="top:67px;left:57.3px;">Fahrzeug G-MF 1199 Golf Plus VOLKSWAGEN</div>
<div class="p" style="top:78px;left:57.3px;">Rechnung</div>
<div class="p" style="top:89px;left:57.3px;">Auftrag 05.05.2021 Rechnung 05.05.2021</div>
<div class="p" style="top:100px;left:57.3px;">Kunde 20116</div>
<div class="p" style="top:115px;left:53.5px;">Wir danken für Ihren Auftrag. Malermeister Fröhlich GbR, Egon Fröhlich, Buchenweg 7, 07545 Gera</div>
<div class="p" style="top:126px;left:53.5px;">Rechnungsdatum 05.05.2021, Kundennummer 20116</div>
<div class="p" style="top:653px;left:61.0px;font-size:7px;line-height:11px;height:11px;">Summe</div>
<div class="p" style="top:653px;left:170.0px;font-size:7px;line-height:11px;height:11px;">550,81</div>
<div class="p" style="top:662px;left:61.0px;font-size:7px;line-height:11px;height:11px;">Rechnung</div>
<div class="p" style="top:662px;left:170.0px;font-size:7px;line-height:11px;height:11px;">10003</div>
<div class="p" style="top:671px;left:61.0px;font-size:7px;line-height:11px;height:11px;">Kunde</div>
<div class="p" style="top:671px;left:170.0px;font-size:7px;line-height:11px;height:11px;">20116</div>
<div class="p" style="top:680px;left:61.0px;font-size:7px;line-height:11px;height:11px;">Rechnungsdatum</div>
<div class="p" style="top:680px;left:170.0px;font-size:7px;line-height:11px;height:11px;">05.05.2021</div>
<div class="p" style="top:653px;left:322.0px;font-size:7px;line-height:11px;height:11px;">Summe</div>
<div class="p" style="top:662px;left:322.0px;font-size:7px;line-height:11px;height:11px;">550,81</div>
<div class="p" style="top:653px;left:398.0px;font-size:7px;line-height:11px;height:11px;">Summe €</div>
<div class="p b" style="top:672px;left:404.0px;font-size:8px;line-height:11px;height:11px;">645,20</div>
<div class="abs" style="left:53.5px;top:699.5px;width:448.9px;height:1px;background:#999"></div>
<div class="p" style="top:746px;left:61.0px;font-size:6.5px;line-height:11px;height:11px;">Gertronix Werkstatt GmbH</div>
<div class="p" style="top:755px;left:61.0px;font-size:6.5px;line-height:11px;height:11px;">Hausgelänge 3</div>
<div class="p" style="top:764px;left:61.0px;font-size:6.5px;line-height:11px;height:11px;">07548 Gera</div>
<div class="p" style="top:746px;left:193.0px;font-size:6.5px;line-height:11px;height:11px;">Tel.: 0365 203040</div>
<div class="p" style="top:755px;left:193.0px;font-size:6.5px;line-height:11px;height:11px;">E-Mail:</div>
<div class="p" style="top:764px;left:193.0px;font-size:6.5px;line-height:11px;height:11px;">info@gertronix.de</div>
<div class="p" style="top:746px;left:280.0px;font-size:6.5px;line-height:11px;height:11px;">Gertronix</div>
<div class="p" style="top:755px;left:280.0px;font-size:6.5px;line-height:11px;height:11px;">Werkstatt</div>
<div class="p" style="top:764px;left:280.0px;font-size:6.5px;line-height:11px;height:11px;">GmbH</div>
<div class="p" style="top:746px;left:367.0px;font-size:6.5px;line-height:11px;height:11px;">Gertronix Werkstatt GmbH</div>
<div class="p" style="top:764px;left:367.0px;font-size:6.5px;line-height:11px;height:11px;">info@gertronix.de</div>
      </div>
    </div>
  </div>
  <!-- toolbar -->
  <div class="abs" id="tb">
    <div class="tbtn tog" style="left:2px;top:2px"></div>
    <svg class="abs" style="left:8px;top:9px" width="17" height="15" viewBox="0 0 17 15" fill="none" stroke="#2a2a2e"><rect x="1.2" y="1.1" width="13.7" height="11.6" rx="2.6" stroke-width="1.7"/><path d="M7.2 1.1 V12.7" stroke-width="1.5"/><path d="M3.2 3.9 H5.6 M3.2 5.8 H5.6 M3.2 7.7 H5.6" stroke-width="0.9"/></svg>
    <svg class="abs" style="left:67px;top:7px" width="18" height="18" viewBox="0 0 18 18" fill="none" stroke="#2a2a2e" stroke-width="1.9" stroke-linecap="round"><circle cx="7" cy="7" r="5"/><path d="M10.8 10.8 L16 16"/></svg>
    <svg class="abs" style="left:98px;top:7px" width="18" height="18" viewBox="0 0 18 18" fill="none" stroke="#9c9c9e" stroke-width="1.7" stroke-linecap="round" stroke-linejoin="round"><path d="M9 16 V2.5 M3 8.3 L9 2.3 L15 8.3"/></svg>
    <div class="sep" style="left:121px;top:6px;height:20px"></div>
    <svg class="abs" style="left:127px;top:7px" width="18" height="18" viewBox="0 0 18 18" fill="none" stroke="#2a2a2e" stroke-width="1.7" stroke-linecap="round" stroke-linejoin="round"><path d="M9 2 V15.5 M3 9.7 L9 15.7 L15 9.7"/></svg>
    <div class="abs" id="pgnum">1</div>
    <div class="t" style="left:213px;top:7px;font-size:12px;line-height:18px;height:18px;color:#222">von 2</div>
    <svg class="abs" style="left:389px;top:8px" width="16" height="16" viewBox="0 0 16 16"><path d="M2 8 H14" stroke="#2a2a2e" stroke-width="1.6"/></svg>
    <div class="sep" style="left:411px;top:6px;height:20px"></div>
    <svg class="abs" style="left:418px;top:8px" width="16" height="16" viewBox="0 0 16 16"><path d="M1.5 8 H14.5 M8 1.5 V14.5" stroke="#2a2a2e" stroke-width="1.6"/></svg>
    <div class="abs" id="zoomsel">70&nbsp;%</div>
    <svg class="abs" style="left:583px;top:11px" width="12" height="10" viewBox="0 0 12 10"><path d="M2 3 L6 7 L10 3" stroke="#111" stroke-width="1.9" fill="none" stroke-linecap="round" stroke-linejoin="round"/></svg>
    <!-- right icons -->
    <svg class="abs" style="left:867px;top:8px" width="17" height="17" viewBox="0 0 17 17"><rect x="4" y="0.4" width="8.3" height="5.4" fill="#f9f9fa" stroke="#48484d" stroke-width="1.2"/><rect x="0.1" y="5" width="16" height="7.2" rx="1.6" fill="#48484d"/><rect x="3.5" y="9.9" width="9.2" height="5.5" fill="#f9f9fa" stroke="#48484d" stroke-width="1.2"/><path d="M5 11.6 H11.3 M5 13.4 H11.3" stroke="#48484d" stroke-width="0.9"/><circle cx="2.2" cy="7.3" r="0.55" fill="#f9f9fa"/></svg>
    <svg class="abs" style="left:897px;top:8px" width="17" height="17" viewBox="0 0 17 17" fill="none" stroke="#48484d" stroke-linejoin="round" stroke-linecap="round"><path d="M13.2 5 H13.9 a1.2 1.2 0 0 1 1.2 1.2 V13 a1.2 1.2 0 0 1 -1.2 1.2 H2.05 a1.2 1.2 0 0 1 -1.2 -1.2 V3.4 a1.2 1.2 0 0 1 1.2 -1.2 H5.7 L8 4.6" stroke-width="1.7"/><path d="M10.64 0.3 V7.6 M8.7 5.9 L10.64 7.9 L12.6 5.9" stroke-width="1.1"/></svg>
    <svg class="abs" style="left:927px;top:8px" width="17" height="17" viewBox="0 0 17 17"><path d="M4 1.1 H12 V15.7 L8 11.7 L4 15.7 Z" fill="#48484d"/></svg>
    <div class="sep" style="left:952px;top:5px;height:22px"></div>
    <svg class="abs" style="left:961px;top:8px" width="18" height="16" viewBox="0 0 18 16" fill="none" stroke="#48484d" stroke-width="1.8" stroke-linejoin="miter"><path d="M3.4 2.2 L9 8 L3.4 13.8 M10 2.2 L15.7 8 L10 13.8"/></svg>
  </div>
</div>
<div class="dbtn" style="left:1215px;width:86px">Schließen</div>
<div class="dbtn" style="left:1309px;width:88px">Download</div>

</body>
</html>
